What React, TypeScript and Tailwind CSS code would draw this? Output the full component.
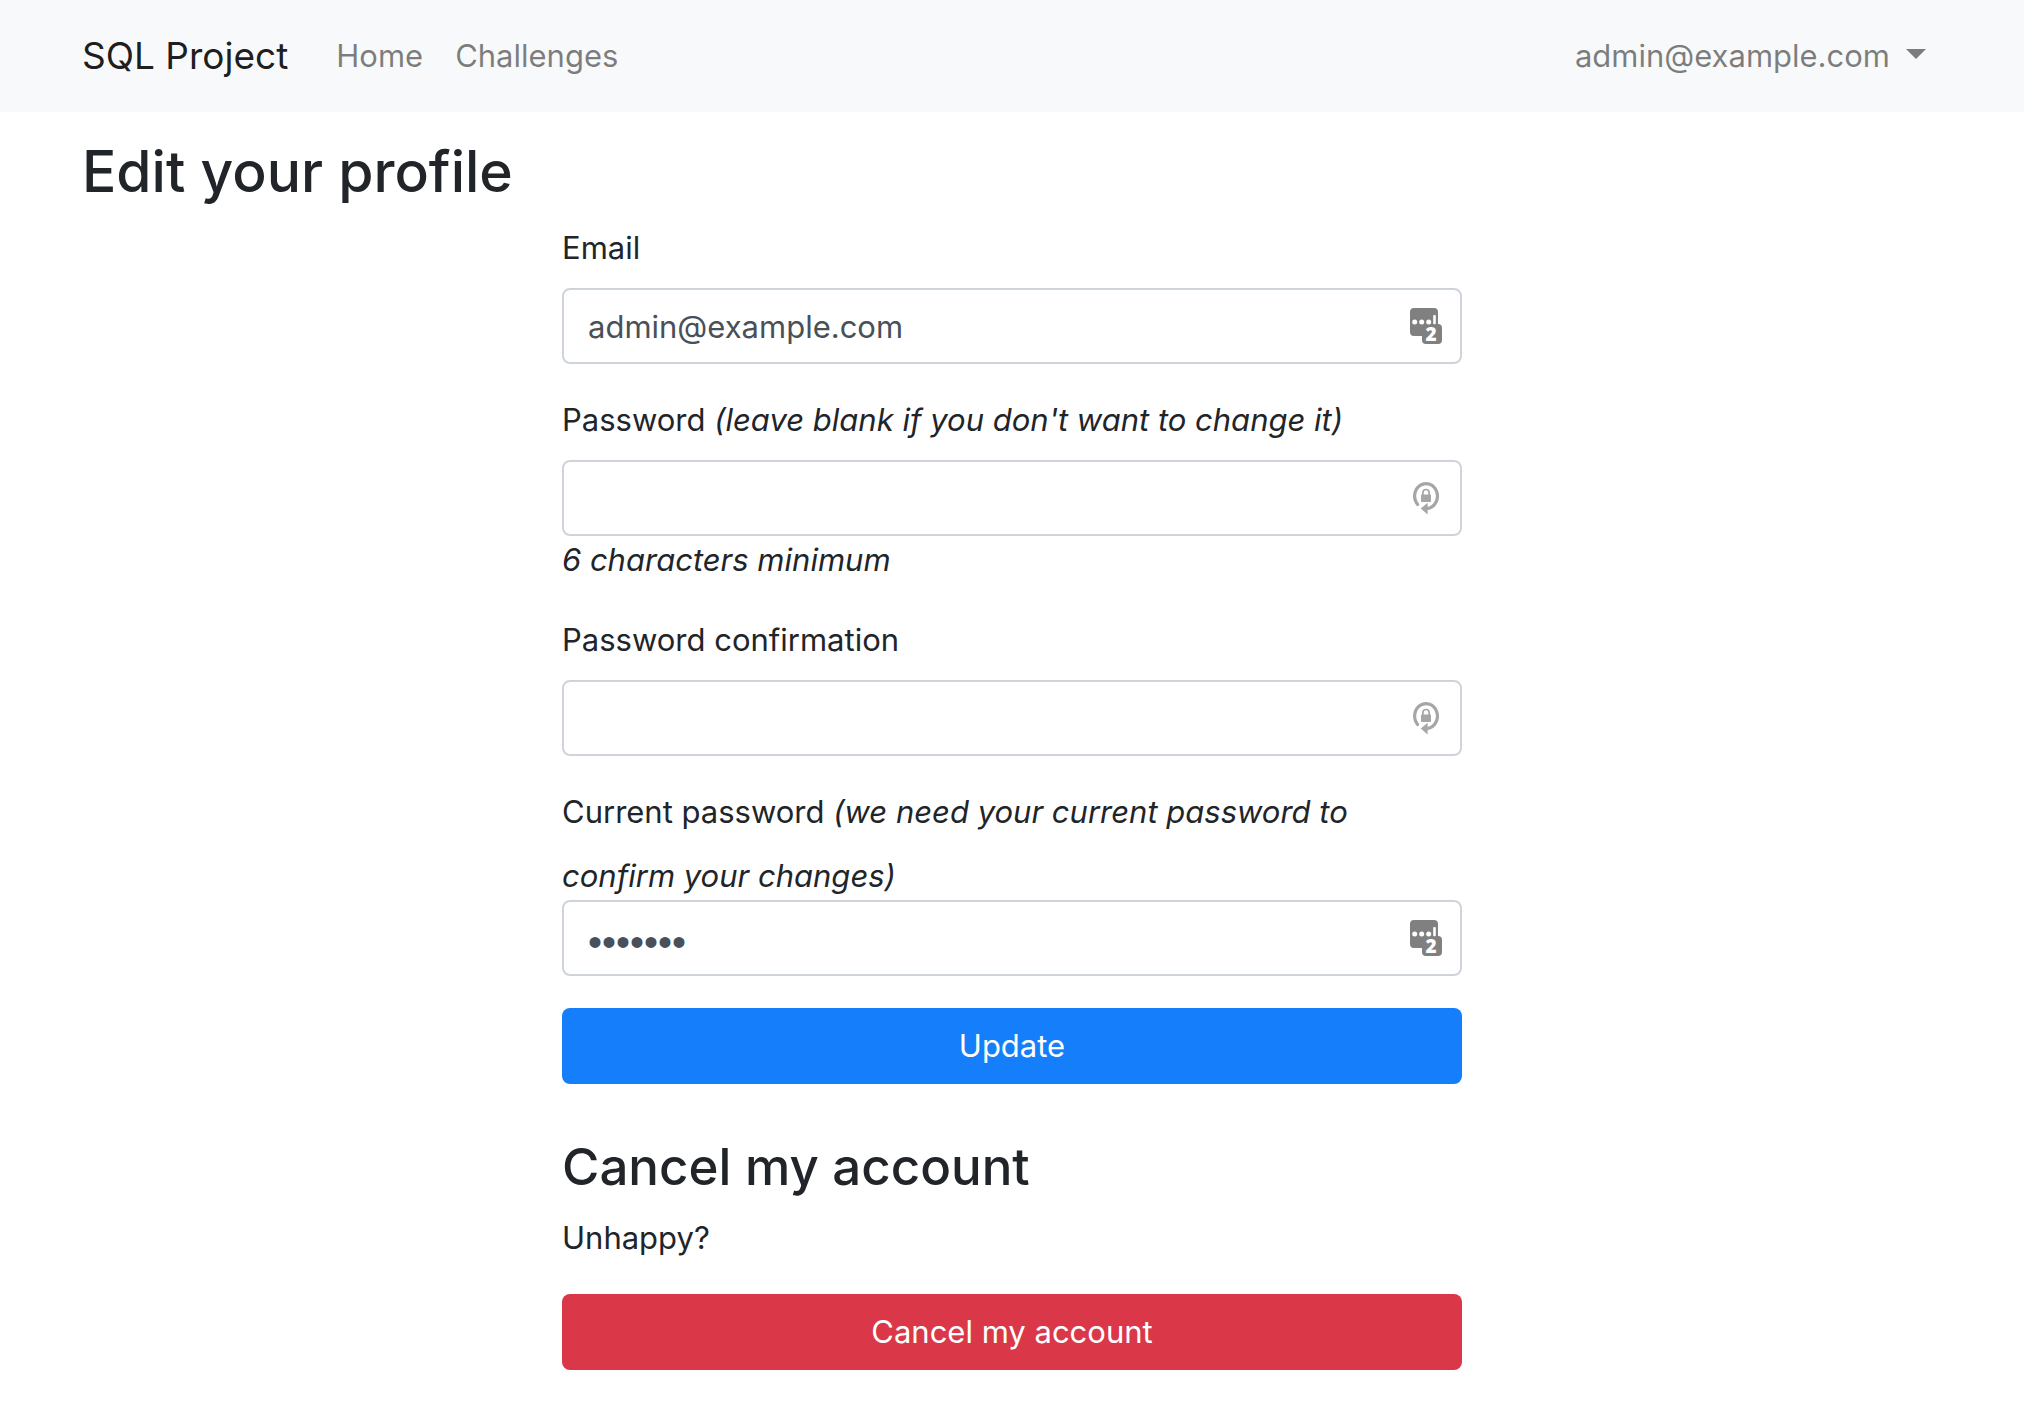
import type { ReactNode } from "react";

function VaultIcon() {
  return (
    <svg viewBox="0 0 32 36" className="h-9 w-8 overflow-visible" aria-hidden="true">
      <path
        fill="#808080"
        d="M4 0h20a4 4 0 0 1 4 4v12a4 4 0 0 1 4 4v12a4 4 0 0 1-4 4H16a4 4 0 0 1-4-4v-4H4a4 4 0 0 1-4-4V4a4 4 0 0 1 4-4z"
      />
      <circle cx="4.7" cy="14" r="2.5" fill="#fff" />
      <circle cx="11.7" cy="14" r="2.5" fill="#fff" />
      <circle cx="18.7" cy="14" r="2.5" fill="#fff" />
      <rect x="23.2" y="7" width="2.6" height="9.2" rx="1" fill="#fff" />
      <text
        x="21"
        y="33"
        textAnchor="middle"
        fill="#fff"
        className="font-['Open_Sans',sans-serif] text-[19px] leading-none font-extrabold"
      >
        2
      </text>
    </svg>
  );
}

function GenerateIcon() {
  return (
    <svg viewBox="0 0 32 36" className="h-9 w-8" aria-hidden="true">
      <path
        d="M7.6 24.5A11.4 12.5 0 1 1 18 28.4"
        fill="none"
        stroke="#a6a6a6"
        strokeWidth="3.2"
        strokeLinecap="round"
      />
      <path d="M10.8 28.6L17.6 22.8v11.6z" fill="#a6a6a6" />
      <rect x="11" y="14.4" width="10" height="7.6" rx="0.8" fill="#a6a6a6" />
      <path d="M12.9 15v-2.4a3.1 3.1 0 0 1 6.2 0V15" fill="none" stroke="#a6a6a6" strokeWidth="1.7" />
    </svg>
  );
}

type FieldProps = {
  id: string;
  label: string;
  type: "email" | "password";
  value?: string;
  note?: string;
  hint?: string;
  icon: ReactNode;
};

const inputFonts = {
  email: "",
  password: "pt-2 font-['Liberation_Sans',sans-serif] text-[40px]",
};

function Field({ id, label, type, value, note, hint, icon }: FieldProps) {
  return (
    <div className="mb-8">
      <div>
        <label htmlFor={id} className="mb-4 inline-block align-baseline">
          {label}
        </label>
        {note && (
          <>
            {" "}
            <i id={`${id}-note`}>{note}</i>
          </>
        )}
      </div>
      <div className="relative">
        <input
          id={id}
          type={type}
          defaultValue={value}
          aria-describedby={note ? `${id}-note` : undefined}
          className={`block h-[76px] w-full rounded-lg border-2 border-[#ced4da] bg-white px-6 text-[#495057] outline-none focus:border-[#80bdff] ${inputFonts[type]}`}
        />
        <span className="pointer-events-none absolute inset-y-0 right-5 flex items-center">{icon}</span>
      </div>
      {hint && <em className="block">{hint}</em>}
    </div>
  );
}

export default function App() {
  return (
    <div className="min-h-screen bg-white font-['Inter',sans-serif] text-[31px] leading-[48px] text-[#212529]">
      <nav className="bg-[#f8f9fa]">
        <div className="mx-auto flex h-28 max-w-[1920px] items-center px-[30px]">
          <a href="#" className="mr-8 text-[37px] text-black/90">
            SQL Project
          </a>
          <a href="#" className="px-4 text-black/50">
            Home
          </a>
          <a href="#" className="px-4 text-black/50">
            Challenges
          </a>
          <button type="button" className="ml-auto flex items-center gap-4 px-4 text-black/50">
            admin@example.com
            <svg viewBox="0 0 20 10" className="mb-1 h-[10px] w-5" aria-hidden="true">
              <path d="M0 0h20L10 10z" fill="currentColor" />
            </svg>
          </button>
        </div>
      </nav>

      <main className="mx-auto max-w-[1920px] px-[30px] pt-5 pb-8">
        <h2 className="mb-3 text-[57px] leading-[80px] font-medium">Edit your profile</h2>
        <div className="mx-auto max-w-[900px]">
          <form onSubmit={(e) => e.preventDefault()}>
            <Field id="email" label="Email" type="email" value="admin@example.com" icon={<VaultIcon />} />
            <Field
              id="password"
              label="Password"
              type="password"
              note="(leave blank if you don't want to change it)"
              hint="6 characters minimum"
              icon={<GenerateIcon />}
            />
            <Field
              id="password-confirmation"
              label="Password confirmation"
              type="password"
              icon={<GenerateIcon />}
            />
            <Field
              id="current-password"
              label="Current password"
              type="password"
              value="pass123"
              note="(we need your current password to confirm your changes)"
              icon={<VaultIcon />}
            />
            <button type="submit" className="h-[76px] w-full rounded-lg bg-[#157efb] text-white">
              Update
            </button>
          </form>
          <h3 className="mt-12 mb-3 text-[51px] leading-[70px] font-medium">Cancel my account</h3>
          <p className="mb-8">Unhappy?</p>
          <button type="button" className="h-[76px] w-full rounded-lg bg-[#da3748] text-white">
            Cancel my account
          </button>
        </div>
      </main>
    </div>
  );
}
